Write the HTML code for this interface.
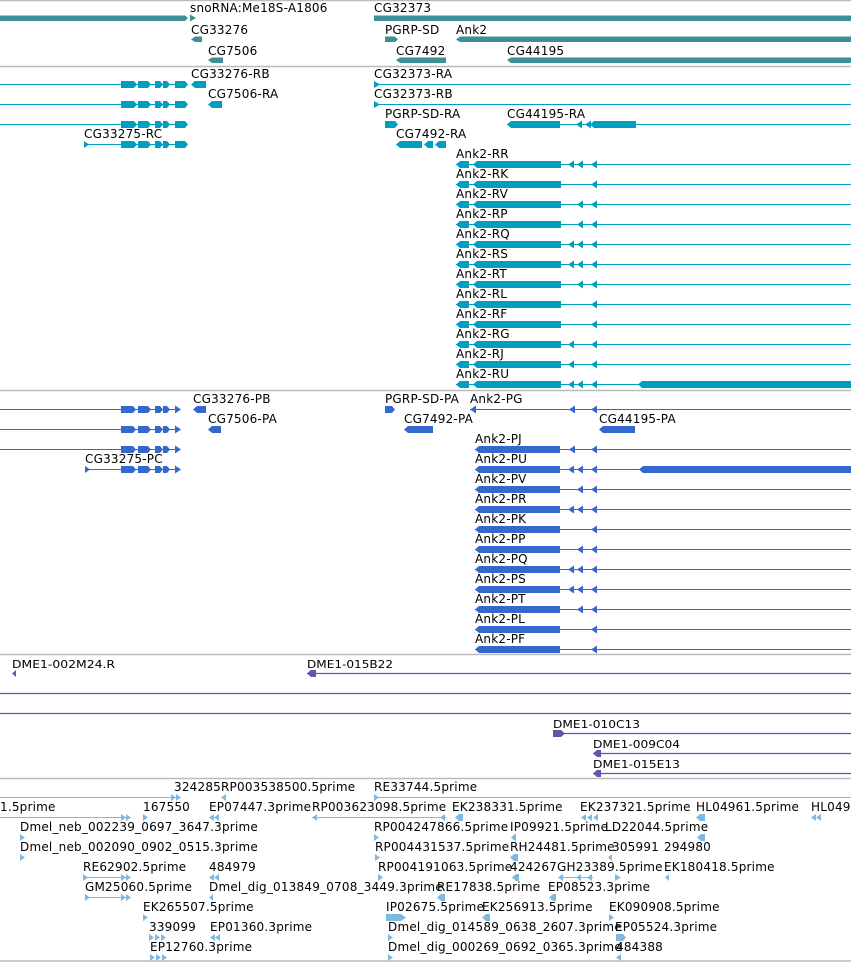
<!DOCTYPE html>
<html><head><meta charset="utf-8"><style>
html,body{margin:0;padding:0;background:#fff;}
svg{display:block;}
text{font-family:"DejaVu Sans","Liberation Sans",sans-serif;font-size:12px;fill:#000;letter-spacing:0.2px;}
.p text{font-family:"DejaVu Sans Condensed","DejaVu Sans",sans-serif;font-size:11px;letter-spacing:0;}
</style></head><body>
<svg width="851" height="962" viewBox="0 0 851 962" xmlns="http://www.w3.org/2000/svg">
<defs>
<g id="cl">
<rect x="121" y="-3.5" width="13" height="7"/><polygon points="134,-3.5 137,0 134,3.5"/>
<rect x="138" y="-3.5" width="10" height="7"/><polygon points="148,-3.5 151,0 148,3.5"/>
<rect x="155" y="-3.5" width="5" height="7"/><polygon points="160,-3.5 163,0 160,3.5"/>
<rect x="163" y="-3.5" width="4" height="7"/><polygon points="167,-3.5 170,0 167,3.5"/>
<rect x="175" y="-3.5" width="10" height="7"/><polygon points="185,-3.5 188,0 185,3.5"/>
</g>
<g id="clp">
<rect x="121" y="-3.5" width="12" height="7"/><polygon points="133,-3.5 136,0 133,3.5"/>
<rect x="138" y="-3.5" width="10" height="7"/><polygon points="148,-3.5 151,0 148,3.5"/>
<rect x="155" y="-3.5" width="5" height="7"/><polygon points="160,-3.5 163,0 160,3.5"/>
<rect x="163" y="-3.5" width="4" height="7"/><polygon points="167,-3.5 170,0 167,3.5"/>
<polygon points="175,-4 181,0 175,4"/>
</g>
<g id="ak">
<polygon points="456,0 460,-3.5 469,-3.5 469,3.5 460,3.5"/>
<polygon points="473,0 477,-3.5 561,-3.5 561,3.5 477,3.5"/>
</g>
<polygon id="pk" points="475,0 479,-3.5 560,-3.5 560,3.5 479,3.5"/>
<polygon id="tl" points="0,0 6,-4 6,4"/>
</defs>

<g stroke="#bbb" stroke-width="1.5">
<line x1="0" y1="0.5" x2="851" y2="0.5"/>
<line x1="0" y1="66.5" x2="851" y2="66.5"/>
<line x1="0" y1="390.5" x2="851" y2="390.5"/>
<line x1="0" y1="654.5" x2="851" y2="654.5"/>
<line x1="0" y1="778.5" x2="851" y2="778.5"/>
<line x1="0" y1="961" x2="851" y2="961"/>
</g>

<g fill="#3f9096">
<polygon points="0,15.5 185,15.5 188,18 185,21 0,21"/>
<polygon points="190,14.5 196,18 190,21.5"/>
<rect x="374" y="15.5" width="477" height="5.5"/>
<polygon points="191,39.5 195,36.5 202,36.5 202,42 195,42"/>
<polygon points="385,36.5 395,36.5 398,39.5 395,42 385,42"/>
<polygon points="456,39.5 460,36.5 851,36.5 851,42 460,42"/>
<polygon points="208,60 212,57.5 223,57.5 223,63 212,63"/>
<polygon points="396,60 400,57.5 446,57.5 446,63 400,63"/>
<polygon points="507,60 511,57.5 851,57.5 851,63 511,63"/>
</g>
<text x="190" y="12">snoRNA:Me18S-A1806</text>
<text x="374" y="12">CG32373</text>
<text x="191" y="34">CG33276</text>
<text x="385" y="34">PGRP-SD</text>
<text x="456" y="34">Ank2</text>
<text x="208" y="55">CG7506</text>
<text x="396" y="55">CG7492</text>
<text x="507" y="55">CG44195</text>

<g fill="#009fc0" stroke="none">
<g stroke="#009fc0" stroke-width="1">
<line x1="0" y1="84.5" x2="185" y2="84.5"/>
<line x1="0" y1="104.5" x2="185" y2="104.5"/>
<line x1="0" y1="124.5" x2="185" y2="124.5"/>
<line x1="84" y1="144.5" x2="185" y2="144.5"/>
<line x1="374" y1="84.5" x2="851" y2="84.5"/>
<line x1="374" y1="104.5" x2="851" y2="104.5"/>
<line x1="507" y1="124.5" x2="851" y2="124.5"/>
</g>
<use href="#cl" y="84.5"/><use href="#cl" y="104.5"/><use href="#cl" y="124.5"/><use href="#cl" y="144.5"/>
<polygon points="84,141 89,144.5 84,148"/>
<polygon points="191,84.5 195,81 206,81 206,88 195,88"/>
<polygon points="208,104.5 212,101 222,101 222,108 212,108"/>
<polygon points="374,81 380,84.5 374,88"/>
<polygon points="374,101 380,104.5 374,108"/>
<polygon points="385,121 395,121 398,124.5 395,128 385,128"/>
<polygon points="507,124.5 511,121 560,121 560,128 511,128"/>
<use href="#tl" x="576" y="124.5"/>
<polygon points="590,124.5 594,121 636,121 636,128 594,128"/>
<use href="#tl" x="585" y="124.5"/>
<polygon points="396,144.5 400,141 422,141 422,148 400,148"/>
<polygon points="424,144.5 428,141 433,141 433,148 428,148"/>
<polygon points="435,144.5 439,141 446,141 446,148 439,148"/>
</g>
<text x="191" y="78">CG33276-RB</text>
<text x="374" y="78">CG32373-RA</text>
<text x="208" y="98">CG7506-RA</text>
<text x="374" y="98">CG32373-RB</text>
<text x="385" y="118">PGRP-SD-RA</text>
<text x="507" y="118">CG44195-RA</text>
<text x="84" y="138">CG33275-RC</text>
<text x="396" y="138">CG7492-RA</text>

<g fill="#009fc0">
<g stroke="#009fc0" stroke-width="1">
<line x1="456" y1="164.5" x2="851" y2="164.5"/><line x1="456" y1="184.5" x2="851" y2="184.5"/>
<line x1="456" y1="204.5" x2="851" y2="204.5"/><line x1="456" y1="224.5" x2="851" y2="224.5"/>
<line x1="456" y1="244.5" x2="851" y2="244.5"/><line x1="456" y1="264.5" x2="851" y2="264.5"/>
<line x1="456" y1="284.5" x2="851" y2="284.5"/><line x1="456" y1="304.5" x2="851" y2="304.5"/>
<line x1="456" y1="324.5" x2="851" y2="324.5"/><line x1="456" y1="344.5" x2="851" y2="344.5"/>
<line x1="456" y1="364.5" x2="851" y2="364.5"/><line x1="456" y1="384.5" x2="851" y2="384.5"/>
</g>
<use href="#ak" y="164.5"/><use href="#tl" x="568" y="164.5"/><use href="#tl" x="577" y="164.5"/><use href="#tl" x="591" y="164.5"/>
<use href="#ak" y="184.5"/><use href="#tl" x="591" y="184.5"/>
<use href="#ak" y="204.5"/><use href="#tl" x="577" y="204.5"/><use href="#tl" x="591" y="204.5"/>
<use href="#ak" y="224.5"/><use href="#tl" x="577" y="224.5"/><use href="#tl" x="591" y="224.5"/>
<use href="#ak" y="244.5"/><use href="#tl" x="568" y="244.5"/><use href="#tl" x="577" y="244.5"/><use href="#tl" x="591" y="244.5"/>
<use href="#ak" y="264.5"/><use href="#tl" x="568" y="264.5"/><use href="#tl" x="577" y="264.5"/><use href="#tl" x="591" y="264.5"/>
<use href="#ak" y="284.5"/><use href="#tl" x="577" y="284.5"/><use href="#tl" x="591" y="284.5"/>
<use href="#ak" y="304.5"/><use href="#tl" x="591" y="304.5"/>
<use href="#ak" y="324.5"/><use href="#tl" x="591" y="324.5"/>
<use href="#ak" y="344.5"/><use href="#tl" x="568" y="344.5"/><use href="#tl" x="591" y="344.5"/>
<use href="#ak" y="364.5"/><use href="#tl" x="568" y="364.5"/><use href="#tl" x="591" y="364.5"/>
<use href="#ak" y="384.5"/><use href="#tl" x="568" y="384.5"/><use href="#tl" x="577" y="384.5"/><use href="#tl" x="591" y="384.5"/>
<polygon points="638,384.5 642,381 851,381 851,388 642,388"/>
</g>
<text x="456" y="158">Ank2-RR</text><text x="456" y="178">Ank2-RK</text><text x="456" y="198">Ank2-RV</text>
<text x="456" y="218">Ank2-RP</text><text x="456" y="238">Ank2-RQ</text><text x="456" y="258">Ank2-RS</text>
<text x="456" y="278">Ank2-RT</text><text x="456" y="298">Ank2-RL</text><text x="456" y="318">Ank2-RF</text>
<text x="456" y="338">Ank2-RG</text><text x="456" y="358">Ank2-RJ</text><text x="456" y="378">Ank2-RU</text>

<g fill="#3468cc">
<g stroke="#3468cc" stroke-width="1">
<line x1="0" y1="409.5" x2="178" y2="409.5"/>
<line x1="0" y1="429.5" x2="178" y2="429.5"/>
<line x1="0" y1="449.5" x2="178" y2="449.5"/>
<line x1="85" y1="469.5" x2="178" y2="469.5"/>
<line x1="470" y1="409.5" x2="851" y2="409.5"/>
<line x1="475" y1="449.5" x2="851" y2="449.5"/><line x1="475" y1="469.5" x2="851" y2="469.5"/>
<line x1="475" y1="489.5" x2="851" y2="489.5"/><line x1="475" y1="509.5" x2="851" y2="509.5"/>
<line x1="475" y1="529.5" x2="851" y2="529.5"/><line x1="475" y1="549.5" x2="851" y2="549.5"/>
<line x1="475" y1="569.5" x2="851" y2="569.5"/><line x1="475" y1="589.5" x2="851" y2="589.5"/>
<line x1="475" y1="609.5" x2="851" y2="609.5"/><line x1="475" y1="629.5" x2="851" y2="629.5"/>
<line x1="475" y1="649.5" x2="851" y2="649.5"/>
</g>
<use href="#clp" y="409.5"/><use href="#clp" y="429.5"/><use href="#clp" y="449.5"/><use href="#clp" y="469.5"/>
<polygon points="85,466 90,469.5 85,473"/>
<polygon points="193,409.5 197,406 206,406 206,413 197,413"/>
<polygon points="208,429.5 212,426 221,426 221,433 212,433"/>
<polygon points="385,406 392,406 395,409.5 392,413 385,413"/>
<use href="#tl" x="470" y="409.5"/><use href="#tl" x="569" y="409.5"/><use href="#tl" x="591" y="409.5"/>
<polygon points="404,429.5 408,426 433,426 433,433 408,433"/>
<polygon points="599,429.5 603,426 635,426 635,433 603,433"/>
<use href="#pk" y="449.5"/><use href="#tl" x="569" y="449.5"/><use href="#tl" x="591" y="449.5"/>
<use href="#pk" y="469.5"/><use href="#tl" x="568" y="469.5"/><use href="#tl" x="577" y="469.5"/><use href="#tl" x="591" y="469.5"/>
<polygon points="639,469.5 643,466 851,466 851,473 643,473"/>
<use href="#pk" y="489.5"/><use href="#tl" x="577" y="489.5"/><use href="#tl" x="591" y="489.5"/>
<use href="#pk" y="509.5"/><use href="#tl" x="568" y="509.5"/><use href="#tl" x="577" y="509.5"/><use href="#tl" x="591" y="509.5"/>
<use href="#pk" y="529.5"/><use href="#tl" x="591" y="529.5"/>
<use href="#pk" y="549.5"/><use href="#tl" x="577" y="549.5"/><use href="#tl" x="591" y="549.5"/>
<use href="#pk" y="569.5"/><use href="#tl" x="568" y="569.5"/><use href="#tl" x="577" y="569.5"/><use href="#tl" x="591" y="569.5"/>
<use href="#pk" y="589.5"/><use href="#tl" x="568" y="589.5"/><use href="#tl" x="577" y="589.5"/><use href="#tl" x="591" y="589.5"/>
<use href="#pk" y="609.5"/><use href="#tl" x="577" y="609.5"/><use href="#tl" x="591" y="609.5"/>
<use href="#pk" y="629.5"/><use href="#tl" x="591" y="629.5"/>
<use href="#pk" y="649.5"/><use href="#tl" x="591" y="649.5"/>
</g>
<text x="193" y="403">CG33276-PB</text><text x="385" y="403">PGRP-SD-PA</text><text x="470" y="403">Ank2-PG</text>
<text x="208" y="423">CG7506-PA</text><text x="404" y="423">CG7492-PA</text><text x="599" y="423">CG44195-PA</text>
<text x="475" y="443">Ank2-PJ</text><text x="85" y="463">CG33275-PC</text><text x="475" y="463">Ank2-PU</text>
<text x="475" y="483">Ank2-PV</text><text x="475" y="503">Ank2-PR</text><text x="475" y="523">Ank2-PK</text>
<text x="475" y="543">Ank2-PP</text><text x="475" y="563">Ank2-PQ</text><text x="475" y="583">Ank2-PS</text>
<text x="475" y="603">Ank2-PT</text><text x="475" y="623">Ank2-PL</text><text x="475" y="643">Ank2-PF</text>

<g class="p">
<g stroke="#6a52a8" stroke-width="1.2">
<line x1="307" y1="673.5" x2="851" y2="673.5"/>
<line x1="0" y1="693.5" x2="851" y2="693.5"/>
<line x1="0" y1="713.5" x2="851" y2="713.5"/>
<line x1="553" y1="733.5" x2="851" y2="733.5"/>
<line x1="593" y1="753.5" x2="851" y2="753.5"/>
<line x1="593" y1="773.5" x2="851" y2="773.5"/>
</g>
<g fill="#6a52a8">
<polygon points="12,673.5 16,670 16,677"/>
<polygon points="307,673.5 311,670 316,670 316,677 311,677"/>
<polygon points="553,730 561,730 565,733.5 561,737 553,737"/>
<polygon points="593,753.5 597,750 601,750 601,757 597,757"/>
<polygon points="593,773.5 597,770 601,770 601,777 597,777"/>
</g>
<text x="12" y="668" textLength="103" lengthAdjust="spacingAndGlyphs">DME1-002M24.R</text>
<text x="307" y="668" textLength="86" lengthAdjust="spacingAndGlyphs">DME1-015B22</text>
<text x="553" y="728" textLength="87" lengthAdjust="spacingAndGlyphs">DME1-010C13</text>
<text x="593" y="748" textLength="87" lengthAdjust="spacingAndGlyphs">DME1-009C04</text>
<text x="593" y="768" textLength="87" lengthAdjust="spacingAndGlyphs">DME1-015E13</text>
</g>

<g fill="#80b9e0">
<g stroke="#80b9e0" stroke-width="1">
<line x1="0" y1="797.5" x2="180" y2="797.5"/>
<line x1="374" y1="797.5" x2="851" y2="797.5"/>
<line x1="0" y1="817.5" x2="128" y2="817.5"/>
<line x1="312" y1="817.5" x2="446" y2="817.5"/>
<line x1="83" y1="877.5" x2="128" y2="877.5"/>
<line x1="85" y1="897.5" x2="128" y2="897.5"/>
<line x1="558" y1="877.5" x2="593" y2="877.5"/>
</g>
<polygon points="171,794 176,797.5 171,801"/><polygon points="176,794 181,797.5 176,801"/>
<polygon points="221,797.5 226,794 226,801"/>
<polygon points="374,794 379,797.5 374,801"/>
<polygon points="121,814 126,817.5 121,821"/><polygon points="126,814 131,817.5 126,821"/>
<polygon points="143,814 148,817.5 143,821"/>
<polygon points="209,817.5 214,814 214,821"/><polygon points="214,817.5 219,814 219,821"/>
<polygon points="312,817.5 317,814 317,821"/>
<polygon points="440,817.5 445,814 445,821"/>
<polygon points="455,817.5 459,814 463,814 463,821 459,821"/>
<polygon points="581,817.5 586,814 586,821"/><polygon points="587,817.5 592,814 592,821"/><polygon points="593,817.5 598,814 598,821"/>
<polygon points="696,817.5 700,814 705,814 705,821 700,821"/>
<polygon points="811,817.5 816,814 816,821"/><polygon points="816,817.5 821,814 821,821"/>
<polygon points="20,834 25,837.5 20,841"/>
<polygon points="374,834 379,837.5 374,841"/>
<polygon points="511,837.5 515,834 516,834 516,841 515,841"/>
<polygon points="697,837.5 701,834 705,834 705,841 701,841"/>
<polygon points="20,854 25,857.5 20,861"/>
<polygon points="375,854 380,857.5 375,861"/>
<polygon points="510,857.5 514,854 518,854 518,861 514,861"/>
<polygon points="608,857.5 612,854 612,861"/>
<polygon points="615,874 621,877.5 615,881"/>
<polygon points="83,874 88,877.5 83,881"/><polygon points="121,874 126,877.5 121,881"/><polygon points="126,874 131,877.5 126,881"/>
<polygon points="209,877.5 214,874 214,881"/><polygon points="214,877.5 219,874 219,881"/>
<polygon points="378,874 383,877.5 378,881"/>
<polygon points="512,877.5 516,874 519,874 519,881 516,881"/>
<polygon points="558,877.5 563,874 563,881"/><polygon points="576,877.5 581,874 581,881"/><polygon points="587,877.5 592,874 592,881"/>
<polygon points="665,877.5 669,874 669,881"/>
<polygon points="85,894 90,897.5 85,901"/><polygon points="121,894 126,897.5 121,901"/><polygon points="126,894 131,897.5 126,901"/>
<polygon points="209,897.5 213,894 213,901"/>
<polygon points="437,897.5 441,894 445,894 445,901 441,901"/>
<polygon points="549,897.5 553,894 556,894 556,901 553,901"/>
<polygon points="143,914 148,917.5 143,921"/>
<polygon points="386,914 401,914 406,917.5 401,921 386,921"/>
<polygon points="482,917.5 486,914 490,914 490,921 486,921"/>
<polygon points="609,914 614,917.5 609,921"/>
<polygon points="149,934 154,937.5 149,941"/><polygon points="155,934 160,937.5 155,941"/><polygon points="161,934 166,937.5 161,941"/>
<polygon points="210,937.5 215,934 215,941"/><polygon points="215,937.5 220,934 220,941"/>
<polygon points="388,934 393,937.5 388,941"/>
<polygon points="616,934 623,934 626,937.5 623,941 616,941"/>
<polygon points="150,954 155,957.5 150,961"/><polygon points="156,954 161,957.5 156,961"/><polygon points="162,954 167,957.5 162,961"/>
<polygon points="388,954 393,957.5 388,961"/>
<polygon points="616,957.5 621,954 621,961"/>
</g>
<text x="174" y="791">324285RP003538500.5prime</text>
<text x="374" y="791">RE33744.5prime</text>
<text x="0" y="811">1.5prime</text>
<text x="143" y="811">167550</text>
<text x="209" y="811">EP07447.3prime</text>
<text x="312" y="811">RP003623098.5prime</text>
<text x="452" y="811">EK238331.5prime</text>
<text x="580" y="811">EK237321.5prime</text>
<text x="696" y="811">HL04961.5prime</text>
<text x="811" y="811">HL049</text>
<text x="20" y="831">Dmel_neb_002239_0697_3647.3prime</text>
<text x="374" y="831">RP004247866.5prime</text>
<text x="510" y="831">IP09921.5prime</text>
<text x="605" y="831">LD22044.5prime</text>
<text x="20" y="851">Dmel_neb_002090_0902_0515.3prime</text>
<text x="375" y="851">RP004431537.5prime</text>
<text x="510" y="851">RH24481.5prime</text>
<text x="612" y="851">305991</text>
<text x="664" y="851">294980</text>
<text x="83" y="871">RE62902.5prime</text>
<text x="209" y="871">484979</text>
<text x="378" y="871">RP004191063.5prime</text>
<text x="510" y="871">424267GH23389.5prime</text>
<text x="664" y="871">EK180418.5prime</text>
<text x="85" y="891">GM25060.5prime</text>
<text x="209" y="891">Dmel_dig_013849_0708_3449.3prime</text>
<text x="437" y="891">RE17838.5prime</text>
<text x="548" y="891">EP08523.3prime</text>
<text x="143" y="911">EK265507.5prime</text>
<text x="386" y="911">IP02675.5prime</text>
<text x="482" y="911">EK256913.5prime</text>
<text x="609" y="911">EK090908.5prime</text>
<text x="149" y="931">339099</text>
<text x="210" y="931">EP01360.3prime</text>
<text x="388" y="931">Dmel_dig_014589_0638_2607.3prime</text>
<text x="615" y="931">EP05524.3prime</text>
<text x="150" y="951">EP12760.3prime</text>
<text x="388" y="951">Dmel_dig_000269_0692_0365.3prime</text>
<text x="616" y="951">484388</text>
</svg>
</body></html>
